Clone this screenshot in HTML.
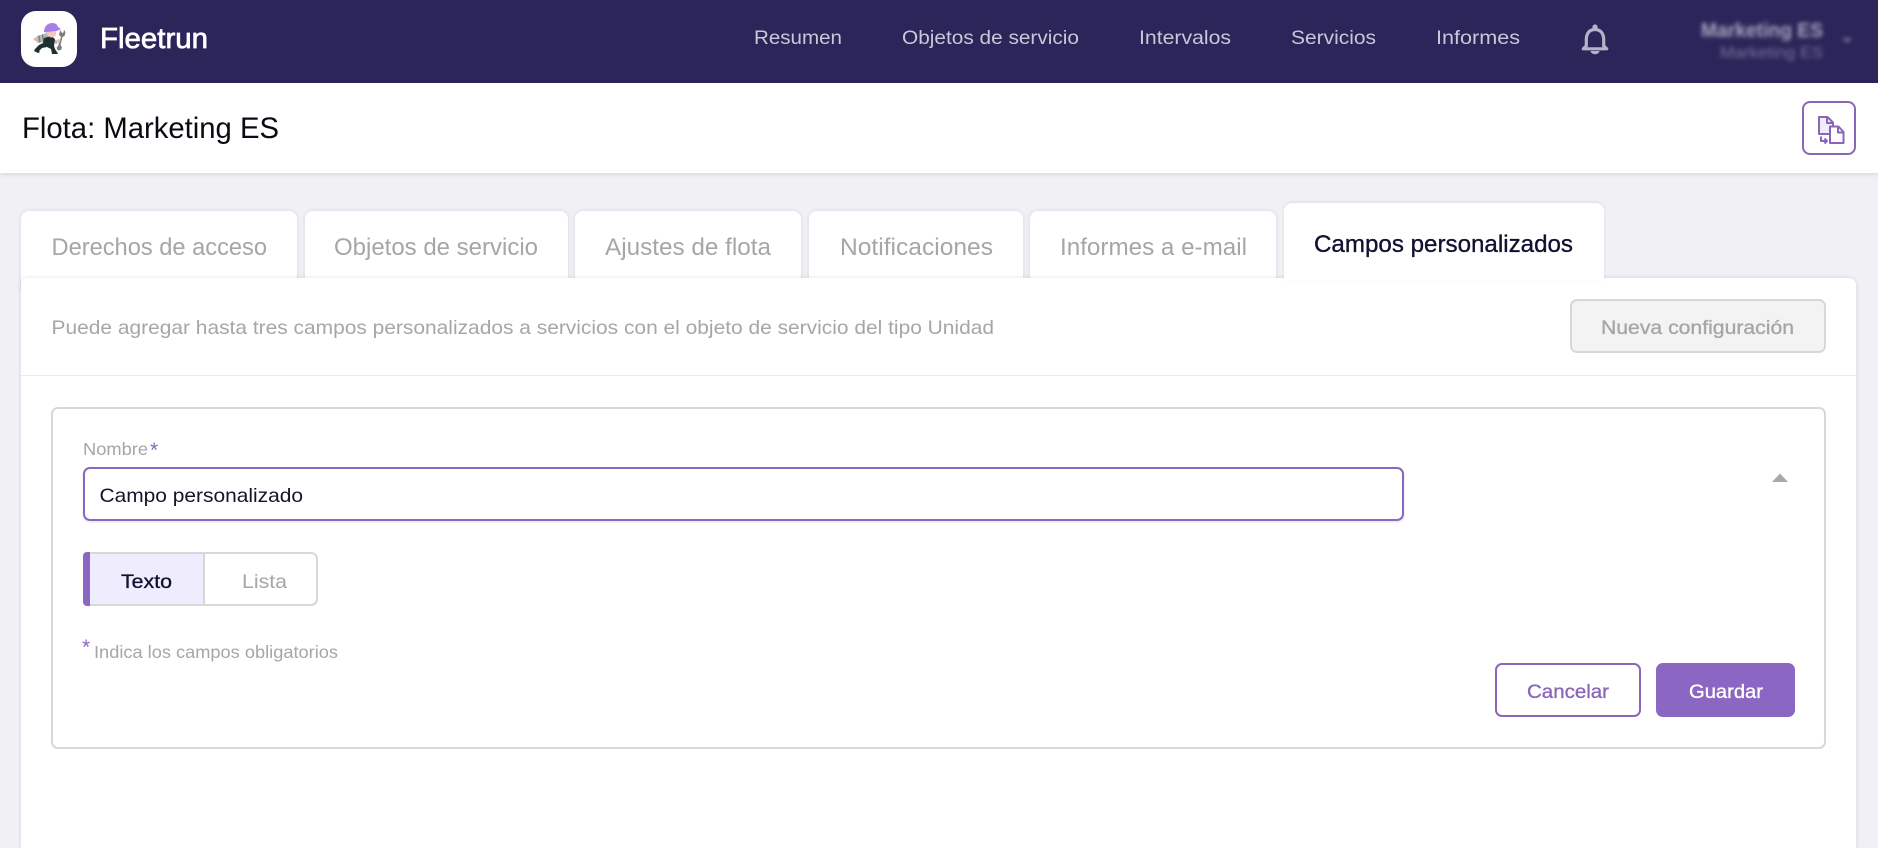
<!DOCTYPE html>
<html lang="es">
<head>
<meta charset="utf-8">
<title>Fleetrun</title>
<style>
html,body{margin:0;padding:0;width:1878px;height:837px;overflow:hidden;background:#f0f0f5;font-family:"Liberation Sans",sans-serif}
.b{position:absolute;box-sizing:border-box}
svg{position:absolute;left:0;top:0}
text{font-family:"Liberation Sans",sans-serif}
.m{stroke-width:.35px}
</style>
</head>
<body>
<div class="b" style="left:0;top:0;width:1878px;height:83px;background:#2b2559"></div>
<div class="b" style="left:0;top:83px;width:1878px;height:90px;background:#fff;box-shadow:0 1px 4px rgba(40,40,80,.14)"></div>
<div class="b" style="left:21px;top:11px;width:56px;height:56px;background:#fff;border-radius:15px"></div>
<div class="b" style="left:1802px;top:101px;width:54px;height:54px;border:2px solid #8b66b8;border-radius:8px;background:#fff"></div>

<div class="b" style="left:21px;top:211px;width:276px;height:80px;background:#fff;border-radius:8px 8px 0 0;box-shadow:0 0 4px rgba(40,40,80,.12)"></div>
<div class="b" style="left:305px;top:211px;width:263px;height:80px;background:#fff;border-radius:8px 8px 0 0;box-shadow:0 0 4px rgba(40,40,80,.12)"></div>
<div class="b" style="left:575px;top:211px;width:226px;height:80px;background:#fff;border-radius:8px 8px 0 0;box-shadow:0 0 4px rgba(40,40,80,.12)"></div>
<div class="b" style="left:809px;top:211px;width:214px;height:80px;background:#fff;border-radius:8px 8px 0 0;box-shadow:0 0 4px rgba(40,40,80,.12)"></div>
<div class="b" style="left:1030px;top:211px;width:246px;height:80px;background:#fff;border-radius:8px 8px 0 0;box-shadow:0 0 4px rgba(40,40,80,.12)"></div>

<div class="b" style="left:21px;top:278px;width:1835px;height:570px;background:#fff;border-radius:7px 7px 0 0;box-shadow:0 0 4px rgba(40,40,80,.14)"></div>
<div class="b" style="left:1284px;top:203px;width:320px;height:78px;background:#fff;border-radius:8px 8px 0 0;box-shadow:0 -1px 3px rgba(40,40,80,.1)"></div>
<div class="b" style="left:1284px;top:270px;width:320px;height:11px;background:#fff"></div>

<div class="b" style="left:21px;top:375px;width:1835px;height:1px;background:#ebebee"></div>
<div class="b" style="left:1570px;top:299px;width:256px;height:54px;background:#f3f3f3;border:2px solid #d8d8d8;border-radius:7px"></div>

<div class="b" style="left:51px;top:407px;width:1775px;height:342px;border:2px solid #d8d8d8;border-radius:7px;background:#fff"></div>
<div class="b" style="left:83px;top:467px;width:1321px;height:54px;border:2px solid #8b66c2;border-radius:7px;background:#fff;box-shadow:0 1px 2px rgba(40,40,80,.15)"></div>

<div class="b" style="left:83px;top:552px;width:235px;height:54px;border:2px solid #d8d8d8;border-radius:7px;background:#fff"></div>
<div class="b" style="left:85px;top:554px;width:118px;height:50px;background:#efedfd"></div>
<div class="b" style="left:83px;top:552px;width:7px;height:54px;background:#8b66c2;border-radius:4px 0 0 4px"></div>
<div class="b" style="left:203px;top:554px;width:2px;height:50px;background:#d8d8d8"></div>

<div class="b" style="left:1495px;top:663px;width:146px;height:54px;border:2px solid #8b66b8;border-radius:7px;background:#fff"></div>
<div class="b" style="left:1656px;top:663px;width:139px;height:54px;background:#8b66c2;border-radius:7px"></div>

<svg width="1878" height="837" viewBox="0 0 1878 837" xmlns="http://www.w3.org/2000/svg">
  <!-- logo mascot -->
  <g>
    <path d="M37 36l10-3 3 2-1 6-11 2-3-3z" fill="#b8b8b8"/>
    <path d="M50 38l8 3-1 3-8-3z" fill="#b8b8b8"/>
    <path d="M39 35.500l1 7M42.500 34.500l1 7" stroke="#777" stroke-width="1.200" fill="none"/>
    <path d="M44 38l7-2 4 3-1 7 1 3 2 3 1 2h-6l-1-5-4-2-5 1-3 3 1 1-2 1-4-2 1-2 4-4 4-2z" fill="#1f3030"/>
    <circle cx="35" cy="39" r="1.500" fill="#f0b9b0"/>
    <path d="M44 32c0-6 4-9 8-9 3 0 5 1 6 4l3 2-4 2-11 1.500z" fill="#a77fe6"/>
    <path d="M47 32l9-1 0 3c0 2-2 3.500-4.500 3.500S47 35.500 47 32z" fill="#f5c6c0"/>
    <path d="M58 46l3-9-2-2 1-5 2 3 1.500-.500 .5-3 1.500 3-1 3.500-2 1-2 8 1.500 2.500-1 2.500-3 .5-1.500-2.500z" fill="#7d7d7d"/>
    <circle cx="58.500" cy="41" r="1.800" fill="#f0b9b0"/>
  </g>
  <text class="f" x="100" y="48" font-size="29" fill="#fff" stroke="#fff" stroke-width=".7" textLength="108" lengthAdjust="spacingAndGlyphs">Fleetrun</text>
  <text x="22" y="138" font-size="29.500" fill="#0a0a12" textLength="257" lengthAdjust="spacingAndGlyphs">Flota: Marketing ES</text>

  <g font-size="19.800" fill="#c9c7d8">
    <text x="754" y="44" textLength="88" lengthAdjust="spacingAndGlyphs">Resumen</text>
    <text x="902" y="44" textLength="177" lengthAdjust="spacingAndGlyphs">Objetos de servicio</text>
    <text x="1139" y="44" textLength="92" lengthAdjust="spacingAndGlyphs">Intervalos</text>
    <text x="1291" y="44" textLength="85" lengthAdjust="spacingAndGlyphs">Servicios</text>
    <text x="1436" y="44" textLength="84" lengthAdjust="spacingAndGlyphs">Informes</text>
  </g>
  <!-- bell -->
  <circle cx="1595" cy="27" r="2.600" fill="#b5b1c9"/>
  <path d="M1595 29.500c5.800 0 8.700 4.300 8.700 10v6.500l3 2.800h-23.400l3-2.800v-6.500c0-5.700 2.900-10 8.700-10z" fill="none" stroke="#b5b1c9" stroke-width="3.200" stroke-linejoin="round"/>
  <path d="M1590.500 51h9a4.500 3.200 0 0 1-9 0z" fill="#b5b1c9"/>
  <!-- blurred account -->
  <defs><filter id="bl" x="-10%" y="-60%" width="120%" height="220%"><feGaussianBlur stdDeviation="2.200"/></filter></defs>
  <g filter="url(#bl)" fill="#a9a6c0">
    <text x="1701" y="37" font-size="20" font-weight="700" textLength="122" lengthAdjust="spacingAndGlyphs">Marketing ES</text>
    <text x="1720" y="58" font-size="16.800" opacity=".6" textLength="103" lengthAdjust="spacingAndGlyphs">Marketing ES</text>
    <path d="M1842 38h10l-5 5z" opacity=".6"/>
  </g>
  <!-- copy icon -->
  <g fill="none" stroke="#8b66b8" stroke-width="2" stroke-linejoin="round">
    <path d="M1829 134h-10v-17h8.500l5.500 5.500v4" fill="#f1ecfa"/>
    <path d="M1827 117.500v5.500h5.500"/>
    <path d="M1830 126.500h8.500l5 5.500v11h-13.500z" fill="#fff"/>
    <path d="M1838 126.500v6h5.500"/>
    <path d="M1821 136.500v4.500h6M1824.500 138.500l2.500 2.500-2.500 2.500"/>
  </g>

  <g font-size="24.200" fill="#a6a6a6">
    <text x="51.500" y="255" textLength="215.500" lengthAdjust="spacingAndGlyphs">Derechos de acceso</text>
    <text x="334" y="255" textLength="204" lengthAdjust="spacingAndGlyphs">Objetos de servicio</text>
    <text x="605" y="255" textLength="166" lengthAdjust="spacingAndGlyphs">Ajustes de flota</text>
    <text x="840" y="255" textLength="153" lengthAdjust="spacingAndGlyphs">Notificaciones</text>
    <text x="1060" y="255" textLength="187" lengthAdjust="spacingAndGlyphs">Informes a e-mail</text>
  </g>
  <text class="m" x="1314" y="252" font-size="24.200" fill="#0f1230" stroke="#0f1230" textLength="259" lengthAdjust="spacingAndGlyphs">Campos personalizados</text>

  <text x="51.500" y="334" font-size="19.800" fill="#a6a6a6" textLength="942.500" lengthAdjust="spacingAndGlyphs">Puede agregar hasta tres campos personalizados a servicios con el objeto de servicio del tipo Unidad</text>
  <text class="m" x="1601" y="334" font-size="19.800" fill="#a6a6a6" stroke="#a6a6a6" textLength="193" lengthAdjust="spacingAndGlyphs">Nueva configuración</text>

  <text x="83" y="455" font-size="17.500" fill="#a6a6a6" textLength="65" lengthAdjust="spacingAndGlyphs">Nombre</text>
  <text x="150" y="457" font-size="21" fill="#8b66c2">*</text>
  <text x="99.500" y="502" font-size="19.800" fill="#14142a" textLength="203.500" lengthAdjust="spacingAndGlyphs">Campo personalizado</text>
  <path d="M1772 482l8-8.500 8 8.500z" fill="#a9a9a9"/>

  <text class="m" x="121" y="588" font-size="19.800" fill="#0f1230" stroke="#0f1230" textLength="51" lengthAdjust="spacingAndGlyphs">Texto</text>
  <text x="242" y="588" font-size="19.800" fill="#a6a6a6" textLength="45" lengthAdjust="spacingAndGlyphs">Lista</text>

  <text x="82" y="654" font-size="21" fill="#8b66c2">*</text>
  <text x="94" y="658" font-size="17.500" fill="#a6a6a6" textLength="244" lengthAdjust="spacingAndGlyphs">Indica los campos obligatorios</text>

  <text class="m" x="1527" y="698" font-size="19.800" fill="#8b66b8" stroke="#8b66b8" textLength="82" lengthAdjust="spacingAndGlyphs">Cancelar</text>
  <text class="m" x="1689" y="698" font-size="19.800" fill="#fff" stroke="#fff" textLength="74" lengthAdjust="spacingAndGlyphs">Guardar</text>
</svg>
</body>
</html>
